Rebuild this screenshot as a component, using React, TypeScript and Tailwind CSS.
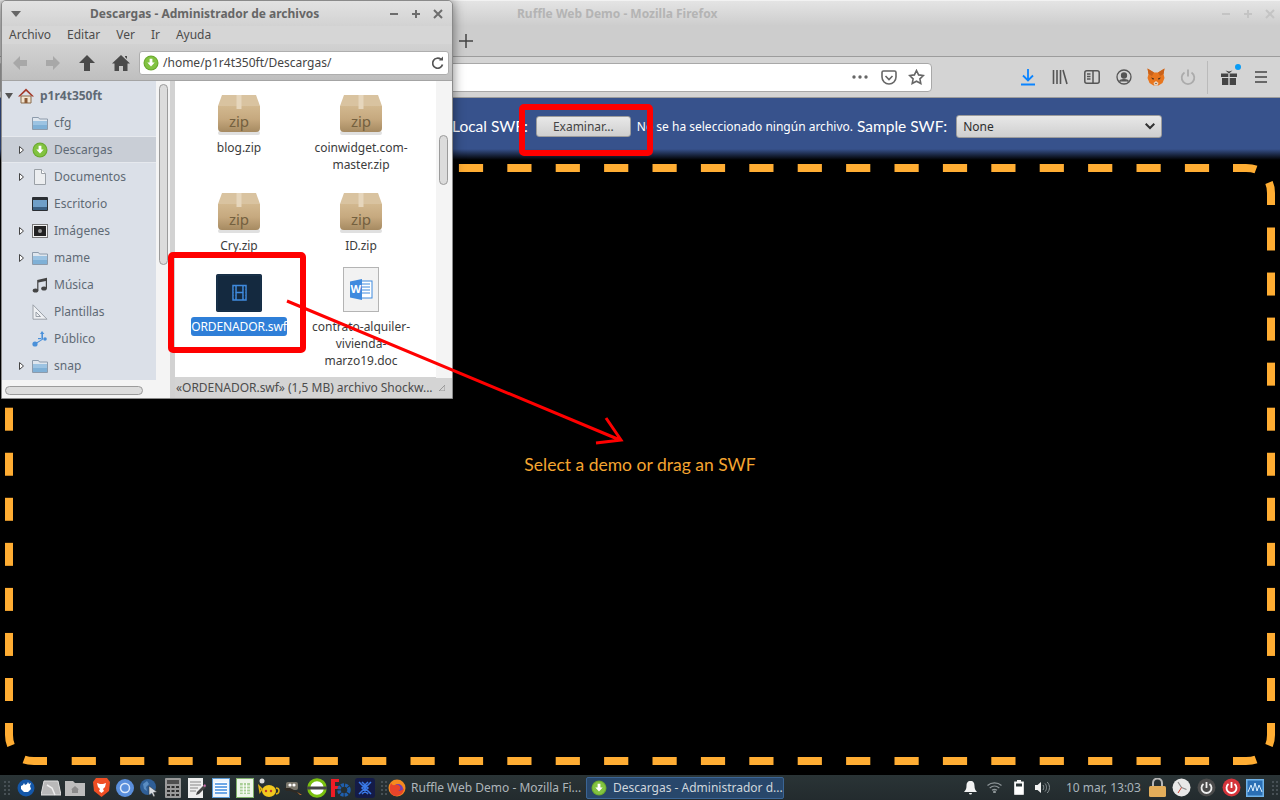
import type { ReactNode } from 'react';

const sidebarRows = [
	{ label: 'cfg', icon: 'folder', arrow: false },
	{ label: 'Descargas', icon: 'download', arrow: true, selected: true },
	{ label: 'Documentos', icon: 'doc', arrow: true },
	{ label: 'Escritorio', icon: 'desktop', arrow: false },
	{ label: 'Imágenes', icon: 'images', arrow: true },
	{ label: 'mame', icon: 'folder', arrow: true },
	{ label: 'Música', icon: 'music', arrow: false },
	{ label: 'Plantillas', icon: 'templates', arrow: false },
	{ label: 'Público', icon: 'share', arrow: false },
	{ label: 'snap', icon: 'folder', arrow: true },
];

const DownloadBadge = ({ size = 16 }: { size?: number }) => (
	<svg width={size} height={size} viewBox="0 0 16 16">
		<circle cx="8" cy="8" r="7.5" fill="#6aa82e" />
		<circle cx="8" cy="8" r="6.5" fill="#82c341" />
		<path d="M6.6 3.8h2.8v3.6h2.3L8 11.6 4.3 7.4h2.3z" fill="#fff" />
	</svg>
);

const FolderIcon = () => (
	<svg width="16" height="16" viewBox="0 0 16 16">
		<path d="M.5 2.5h6l1 1.5h8v10.5H.5z" fill="#dfe6ee" stroke="#8d9bab" />
		<rect x="1" y="6" width="14" height="8" fill="#9cc3e2" />
		<rect x="1" y="10" width="14" height="4" fill="#7fb0d6" />
	</svg>
);

const SideIcon = ({ name }: { name: string }) => {
	if (name === 'folder') return <FolderIcon />;
	if (name === 'download') return <DownloadBadge />;
	if (name === 'doc')
		return (
			<svg width="16" height="16" viewBox="0 0 16 16">
				<path d="M2.5.5h7l4 4v11h-11z" fill="#eceef0" stroke="#9aa0a6" />
				<path d="M9.5.5v4h4" fill="#fff" stroke="#9aa0a6" />
			</svg>
		);
	if (name === 'desktop')
		return (
			<svg width="16" height="16" viewBox="0 0 16 16">
				<rect y="1" width="16" height="14" rx="1" fill="#2a2e33" />
				<rect x="1" y="4" width="14" height="7" fill="#6f9fc8" />
				<rect x="1" y="11" width="14" height="3" fill="#3a5f82" />
			</svg>
		);
	if (name === 'images')
		return (
			<svg width="16" height="16" viewBox="0 0 16 16">
				<rect x=".5" y="1.5" width="15" height="13" fill="#f2f2f2" stroke="#777" />
				<rect x="2" y="3" width="12" height="10" fill="#222" />
				<circle cx="8" cy="8" r="2" fill="#999" />
			</svg>
		);
	if (name === 'music')
		return (
			<svg width="16" height="16" viewBox="0 0 16 16" fill="#444">
				<ellipse cx="3.5" cy="13.5" rx="2.8" ry="2" />
				<ellipse cx="12" cy="11.5" rx="2.8" ry="2" />
				<path d="M5.2 13.5V3L15 .8v10.6h-1.2V4L6.4 5.6v7.9z" />
			</svg>
		);
	if (name === 'templates')
		return (
			<svg width="16" height="16" viewBox="0 0 16 16" fill="none" stroke="#9aa0a8">
				<path d="M1 .8v14.4h14z" fill="#eef0f3" />
				<path d="M4 8v4.5h4.5z" />
			</svg>
		);
	return (
		<svg width="16" height="16" viewBox="0 0 16 16" fill="#4a90d9">
			<circle cx="3" cy="13" r="2.6" />
			<circle cx="13" cy="8" r="1.8" />
			<path d="M10 0l2.4 3H11v5.5L4 13l-.6-1 6-3.6V3H8z" />
			<path d="M6 7h3v1.2H6z" />
		</svg>
	);
};

const ZipIcon = () => (
	<svg width="44" height="42" viewBox="0 0 44 42">
		<defs>
			<linearGradient id="zipBody" x1="0" y1="0" x2="0" y2="1">
				<stop offset="0" stopColor="#d2b88f" />
				<stop offset="0.5" stopColor="#c6a97f" />
				<stop offset="1" stopColor="#a68a61" />
			</linearGradient>
		</defs>
		<rect x="1" y="37" width="42" height="4" rx="2" fill="#e0e0e0" />
		<path d="M5 1h34l4 11H1z" fill="#d9c3a0" />
		<path d="M1 12h42v22a4 4 0 0 1-4 4H5a4 4 0 0 1-4-4z" fill="url(#zipBody)" />
		<rect x="19.500" y="1" width="5" height="14" fill="#e6d6bc" />
		<text x="22" y="33" textAnchor="middle" fontSize="15" fontFamily="Noto Sans, sans-serif" fill="#74603f">
			zip
		</text>
	</svg>
);

const SwfIcon = () => (
	<svg width="46" height="38" viewBox="0 0 46 38">
		<rect width="46" height="38" rx="2" fill="#0f2238" />
		<rect x="1" y="1" width="44" height="36" rx="1" fill="#14293f" stroke="#1f3a55" />
		<g fill="none" stroke="#3f8ade" strokeWidth="1.500">
			<rect x="17" y="11.500" width="13" height="14.500" />
			<path d="M20 11.500v14.500M27 11.500v14.500M20 18.500h7" />
			<path d="M17.700 14h1.500M17.700 17h1.500M17.700 20h1.500M17.700 23h1.500M27.800 14h1.500M27.800 17h1.500M27.800 20h1.500M27.800 23h1.500" strokeWidth="1" stroke="#14293f" />
		</g>
	</svg>
);

const WordIcon = () => (
	<svg width="36" height="45" viewBox="0 0 36 45">
		<rect x=".5" y=".5" width="35" height="44" fill="#f2f2f2" stroke="#b4b4b4" />
		<rect x="16" y="14" width="13" height="17" fill="#fff" stroke="#3f8ade" />
		<path d="M18 17h9M18 20h9M18 23h9M18 26h9" stroke="#3f8ade" />
		<path d="M7 14.500l12-2.500v21l-12-2.500z" fill="#3f8ade" />
		<text x="12.800" y="26" textAnchor="middle" fontSize="11" fontWeight="700" fontFamily="Noto Sans, sans-serif" fill="#fff">
			W
		</text>
	</svg>
);

const FileCell = ({ icon, children, className = '' }: { icon: ReactNode; children: ReactNode; className?: string }) => (
	<div className="flex flex-col items-center">
		<div className="flex h-[48px] items-end pb-[3px]">{icon}</div>
		<div className={`text-center leading-[17px] text-[#3c3c3c] ${className}`}>{children}</div>
	</div>
);

const ThunarWindow = () => (
	<div className="absolute left-[1px] top-0 flex h-[399px] w-[452px] flex-col overflow-hidden rounded-t-[5px] border border-[#8a8a8a] bg-[#d4d4d4] text-[12px] shadow-[0_0_12px_rgba(0,0,0,0.5)]">
		{/* title */}
		<div className="flex h-[25px] shrink-0 items-center bg-[linear-gradient(#e2e2e2,#d2d2d2)] font-bold text-[#666]">
			<svg width="10" height="6" viewBox="0 0 10 6" className="ml-[9px]">
				<path d="M0 0h10L5 6z" fill="#666" />
			</svg>
			<span className="ml-[69px]">Descargas - Administrador de archivos</span>
			<div className="ml-auto mr-[9px] flex items-center gap-[12px] text-[#6d6d6d]">
				<svg width="10" height="10" viewBox="0 0 10 10"><path d="M1 5h8" stroke="currentColor" strokeWidth="2" /></svg>
				<svg width="10" height="10" viewBox="0 0 10 10"><path d="M1 5h8M5 1v8" stroke="currentColor" strokeWidth="2" /></svg>
				<svg width="10" height="10" viewBox="0 0 10 10"><path d="M1 1l8 8M9 1l-8 8" stroke="currentColor" strokeWidth="2" /></svg>
			</div>
		</div>
		{/* menu */}
		<div className="flex h-[18px] shrink-0 items-center gap-[16px] bg-[#d6d6d6] pl-[7px] text-[#4c4c4c]">
			<span>Archivo</span>
			<span>Editar</span>
			<span>Ver</span>
			<span>Ir</span>
			<span>Ayuda</span>
		</div>
		{/* toolbar */}
		<div className="flex h-[37px] shrink-0 items-center border-b border-[#a4a4a4] bg-[linear-gradient(#d2d2d2,#bfbfbf)] pl-[9px] pt-[2px]">
			<div className="flex items-center gap-[14px]">
				<svg width="18" height="18" viewBox="0 0 18 18"><path d="M9 2L2 9l7 7v-4h7V6H9z" fill="#a8a8a8" /></svg>
				<svg width="18" height="18" viewBox="0 0 18 18" className="ml-[1px]"><path d="M9 2l7 7-7 7v-4H2V6h7z" fill="#a8a8a8" /></svg>
				<svg width="18" height="18" viewBox="0 0 18 18" className="ml-[2px]"><path d="M9 1l8 8h-5v8H6V9H1z" fill="#4a4a4a" /></svg>
				<svg width="18" height="18" viewBox="0 0 18 18" className="ml-[2px]"><path d="M9 1L0 9.500h2.500V17h4.500v-5h4v5h4.500V9.500H18zM13 2h2v3l-2-2z" fill="#4a4a4a" /></svg>
			</div>
			<div className="ml-[9px] flex h-[24px] w-[310px] items-center rounded-[3px] border border-[#aeaeae] bg-white pl-[3px] pr-[3px] text-[#444]">
				<DownloadBadge />
				<span className="ml-[4px]">/home/p1r4t350ft/Descargas/</span>
				<svg width="14" height="14" viewBox="0 0 14 14" className="ml-auto" fill="none" stroke="#555" strokeWidth="1.700">
					<path d="M11.500 8.500a5 5 0 1 1-1.500-5" />
					<path d="M8 4.500h4V.5z" fill="#555" stroke="none" />
				</svg>
			</div>
		</div>
		{/* panes */}
		<div className="flex min-h-0 flex-1">
			<div className="relative flex w-[173px] shrink-0 bg-[#d2d2d2]">
				<div className="relative w-[168px] overflow-hidden bg-[#f4f4f4]">
					<div className="flex h-[299px] w-[154px] flex-col bg-[#dbe0e8] pt-[1px] text-[#5f6a75]">
						<div className="flex h-[27px] items-center font-bold">
							<svg width="8" height="6" viewBox="0 0 8 6" className="ml-[3px]"><path d="M0 0h8L4 6z" fill="#555" /></svg>
							<svg width="16" height="16" viewBox="0 0 16 16" className="ml-[5px]">
								<path d="M3 8v7h10V8z" fill="#f2e4d0" stroke="#8a6a4a" />
								<path d="M8 .5L0 8.500h2L8 3l6 5.500h2z" fill="#a33a2a" />
								<rect x="6.500" y="10" width="3" height="5" fill="#8a5a36" />
							</svg>
							<span className="ml-[6px]">p1r4t350ft</span>
						</div>
						{sidebarRows.map((row) => (
							<div
								key={row.label}
								className={`flex h-[27px] items-center ${row.selected ? 'border-y border-[#e6e9ee] bg-[#c9ced6]' : ''}`}
							>
								<div className="flex w-[30px] shrink-0 justify-end pr-[8px]">
									{row.arrow && (
										<svg width="5" height="8" viewBox="0 0 5 8"><path d="M.5.5l4 3.500-4 3.500z" fill="#fff" stroke="#444" /></svg>
									)}
								</div>
								<SideIcon name={row.icon} />
								<span className="ml-[6px]">{row.label}</span>
							</div>
						))}
					</div>
					<div className="absolute right-[2px] top-[3px] h-[181px] w-[9px] rounded-full border border-[#9b9b9b] bg-[#dcdcdc]" />
					<div className="absolute bottom-[3px] left-[3px] h-[9px] w-[138px] rounded-full border border-[#9b9b9b] bg-[#dcdcdc]" />
				</div>
			</div>
			<div className="flex min-w-0 flex-1 flex-col">
				<div className="flex min-h-0 flex-1">
					<div className="grid h-[296px] w-[261px] shrink-0 grid-cols-[122px_122px] grid-rows-[98px_78px_110px] overflow-hidden bg-white pl-[3px] pt-[10px]">
						<FileCell icon={<ZipIcon />}>blog.zip</FileCell>
						<FileCell icon={<ZipIcon />}>
							coinwidget.com-
							<br />
							master.zip
						</FileCell>
						<FileCell icon={<ZipIcon />}>Cry.zip</FileCell>
						<FileCell icon={<ZipIcon />}>ID.zip</FileCell>
						<FileCell icon={<SwfIcon />} className="mt-[2px] rounded-[3px] bg-[#2f7fd8] !leading-[19px] tracking-[-0.12px] !text-white">
							ORDENADOR.swf
						</FileCell>
						<FileCell icon={<WordIcon />} className="mt-[3px]">
							contrato-alquiler-
							<br />
							vivienda-
							<br />
							marzo19.doc
						</FileCell>
					</div>
					<div className="relative flex-1 bg-[#f4f4f4]">
						<div className="absolute left-[3px] top-[54px] h-[50px] w-[9px] rounded-full border border-[#9b9b9b] bg-[#dcdcdc]" />
					</div>
				</div>
				<div className="flex h-[20px] shrink-0 items-center bg-[#d4d4d4] pl-[1px] text-[#4c4c4c]">
					<span className="tracking-[-0.03px]">«ORDENADOR.swf» (1,5 MB) archivo Shockw...</span>
					<svg width="6" height="6" viewBox="0 0 6 6" className="ml-auto mr-[7px]"><path d="M6 0v6H0z" fill="none" stroke="#999" /></svg>
				</div>
			</div>
		</div>
	</div>
);

const FoxIcon = () => (
	<svg width="18" height="18" viewBox="0 0 18 18">
		<path d="M.5.5l6.500 4h4L17.500.5 16.500 6l1 4-2 5-4 2.500h-5L2.500 15l-2-5 1-4z" fill="#e8761e" />
		<path d="M.5.5L7 4.500 5 8 1.500 6zM17.500.5L11 4.500 13 8l3.500-2z" fill="#c9621a" />
		<path d="M4 9.500l3 .8-.8 1.800zM14 9.500l-3 .8.8 1.800z" fill="#4a2f1a" />
		<path d="M6.500 15l1 2.500h3l1-2.500-2.500-2z" fill="#e8d3c0" />
		<path d="M8 15h2l-1 1z" fill="#222" />
	</svg>
);

const FirefoxToolbarIcons = () => (
	<div className="ml-auto flex items-center">
		<div className="flex w-[32px] justify-center">
			<svg width="16" height="18" viewBox="0 0 16 18" fill="none" stroke="#0a84ff" strokeWidth="1.800">
				<path d="M8 1v11M3 7.500l5 5 5-5M1 16.500h14" />
			</svg>
		</div>
		<div className="flex w-[32px] justify-center">
			<svg width="16" height="16" viewBox="0 0 16 16" fill="none" stroke="#555" strokeWidth="1.600">
				<path d="M1.500 1v14M5 1v14M8.500 1v14M11 1l4 14" />
			</svg>
		</div>
		<div className="flex w-[32px] justify-center">
			<svg width="16" height="14" viewBox="0 0 16 14" fill="none" stroke="#555" strokeWidth="1.500">
				<rect x=".8" y=".8" width="14.400" height="12.400" rx="2" />
				<path d="M9 1v12M3 4h3.500M3 6.500h3.500M3 9h3.500" />
			</svg>
		</div>
		<div className="flex w-[32px] justify-center">
			<svg width="16" height="16" viewBox="0 0 16 16" fill="none" stroke="#555" strokeWidth="1.300">
				<circle cx="8" cy="8" r="7" />
				<circle cx="8" cy="6.500" r="2.500" fill="#555" />
				<path d="M3.500 12.500c1-2.500 8-2.500 9 0" fill="#555" />
			</svg>
		</div>
		<div className="flex w-[32px] justify-center">
			<FoxIcon />
		</div>
		<div className="flex w-[32px] justify-center">
			<svg width="16" height="16" viewBox="0 0 16 16" fill="none" stroke="#ababab" strokeWidth="1.800">
				<path d="M4.500 3.500a6.300 6.300 0 1 0 7 0M8 .5v7" />
			</svg>
		</div>
		<div className="ml-[3px] mr-[5px] h-[33px] w-px bg-[#bababa]" />
		<div className="relative flex w-[32px] justify-center">
			<svg width="16" height="16" viewBox="0 0 16 16" fill="#444">
				<path d="M0 4.500h7.300v3.500H0zM8.700 4.500H16v3.500H8.700zM1 9h6.300v7H1zM8.700 9H15v7H8.700z" />
				<path d="M8 4.500L4.500 1.500 8 2.500l3.500-1z" />
			</svg>
			<span className="absolute right-[4px] top-[-5px] h-[6px] w-[6px] rounded-full bg-[#0a9cf5]" />
		</div>
		<div className="flex w-[32px] justify-center">
			<svg width="14" height="12" viewBox="0 0 14 12" stroke="#444" strokeWidth="1.600">
				<path d="M1 1h12M1 6h12M1 11h12" />
			</svg>
		</div>
		<div className="w-[3px]" />
	</div>
);

const Firefox = () => (
	<div className="flex min-h-0 flex-1 flex-col">
		<div className="h-[57px] shrink-0 border-b border-[#9c9c9c] border-t border-t-[#f2f2f2] bg-[linear-gradient(#e4e4e4,#cdcdcd_45%,#cdcdcd)]">
			<div className="flex h-[26px] items-center pl-[517px] pr-[5px] text-[12px] font-bold text-[#b4b4b4]">
				Ruffle Web Demo - Mozilla Firefox
				<div className="ml-auto flex items-center gap-[12px] text-[#c4c4c4]">
					<svg width="10" height="10" viewBox="0 0 10 10"><path d="M1 5h8" stroke="currentColor" strokeWidth="2" /></svg>
					<svg width="10" height="10" viewBox="0 0 10 10"><path d="M1 5h8M5 1v8" stroke="currentColor" strokeWidth="2" /></svg>
					<svg width="10" height="10" viewBox="0 0 10 10"><path d="M1 1l8 8M9 1l-8 8" stroke="currentColor" strokeWidth="2" /></svg>
				</div>
			</div>
			<div className="flex h-[27px] items-center pl-[459px]">
				<svg width="14" height="14" viewBox="0 0 14 14" stroke="#444" strokeWidth="1.500"><path d="M7 0v14M0 7h14" /></svg>
			</div>
		</div>
		<div className="flex h-[41px] shrink-0 items-center border-b border-[#9c9c9c] bg-[#d4d4d4]">
			<div className="flex h-[29px] w-[932px] shrink-0 items-center justify-end rounded-r-[4px] border border-[#a8a8a8] bg-white pr-[6px]">
				<div className="flex items-center gap-[13px]">
					<svg width="16" height="4" viewBox="0 0 16 4" fill="#666">
						<circle cx="2" cy="2" r="1.700" />
						<circle cx="8" cy="2" r="1.700" />
						<circle cx="14" cy="2" r="1.700" />
					</svg>
					<svg width="16" height="15" viewBox="0 0 16 15" fill="none" stroke="#666" strokeWidth="1.600">
						<path d="M1 2.500a1.500 1.500 0 0 1 1.500-1.500h11a1.500 1.500 0 0 1 1.500 1.500V7a7 7 0 0 1-14 0z" />
						<path d="M4.500 6l3.500 3.500L11.500 6" />
					</svg>
					<svg width="17" height="16" viewBox="0 0 17 16" fill="none" stroke="#666" strokeWidth="1.600" className="-ml-[2px]">
						<path d="M8.500 1.500l2.100 4.400 4.800.6-3.500 3.300.9 4.700-4.300-2.300-4.300 2.300.9-4.700-3.500-3.300 4.800-.6z" />
					</svg>
				</div>
			</div>
			<FirefoxToolbarIcons />
		</div>
		<div className="flex h-[64px] shrink-0 items-start bg-[linear-gradient(#37528c,#37528c_51px,#000_62px)] pl-[452px] pt-[16px] text-white">
			<div className="flex h-[25px] items-center">
				<span className="font-['Lato',sans-serif] text-[15.5px]">Local SWF:</span>
				<div className="ml-[8px] flex h-[21px] w-[95px] items-center justify-center rounded-[3px] border border-[#9c9c9c] bg-[linear-gradient(#e8e8e8,#cfcfcf)] text-[12px] text-[#444]">
					Examinar...
				</div>
				<span className="ml-[6px] text-[12px]">No se ha seleccionado ningún archivo.</span>
				<span className="ml-[4px] font-['Lato',sans-serif] text-[15.5px]">Sample SWF:</span>
				<div className="ml-[9px] flex h-[23px] w-[206px] items-center justify-between rounded-[3px] border border-[#9c9c9c] bg-[linear-gradient(#e8e8e8,#cfcfcf)] pl-[6px] pr-[6px] text-[12px] text-[#2e2e2e]">
					None
					<svg width="10" height="7" viewBox="0 0 10 7" fill="none" stroke="#333" strokeWidth="2"><path d="M.7.7L5 5l4.300-4.300" /></svg>
				</div>
			</div>
		</div>
		<div className="flex min-h-0 flex-1 items-center justify-center bg-black pb-[6px] font-['Lato',sans-serif] text-[17.5px] text-[#f5a530]">
			Select a demo or drag an SWF
		</div>
	</div>
);

const topDashes = Array.from({ length: 24 }, (_, i) => 71.7 + 48.4 * i);
const sideDashes = Array.from({ length: 11 }, (_, i) => 227.5 + 45.05 * i);

const DashedFrame = () => (
	<svg className="pointer-events-none absolute left-0 top-0" width="1280" height="800" fill="none" stroke="#ffad33" strokeWidth="8">
		{topDashes.map((x) => (
			<g key={x}>
				<path d={`M${x} 168h24.2`} />
				<path d={`M${x} 761h24.2`} />
			</g>
		))}
		{sideDashes.map((y) => (
			<g key={y}>
				<path d={`M9 ${y}v23`} />
				<path d={`M1271 ${y}v23`} />
			</g>
		))}
		<path d="M1233 168h13q6 0 10 1.500" />
		<path d="M1271 205v-12q0-6-2-10.500" />
		<path d="M1233 761h13q6 0 10-1.500" />
		<path d="M1271 723v12q0 6-2 10.500" />
		<path d="M47 761H34q-6 0-10-1.500" />
		<path d="M9 723v12q0 6 2 10.500" />
	</svg>
);

const Annotations = () => (
	<>
		<div className="absolute left-[168px] top-[252px] h-[101px] w-[138px] rounded-[5px] border-[6px] border-[#ff0000]" />
		<div className="absolute left-[519px] top-[104px] h-[52px] w-[134px] rounded-[5px] border-[6px] border-[#ff0000]" />
		<svg className="pointer-events-none absolute left-0 top-0" width="1280" height="800" fill="none" stroke="#ff0000" strokeWidth="3">
			<path d="M287 301L620 440M606 418l15 22-25 3" />
		</svg>
	</>
);

const slots: ReactNode[] = [
	<svg key="dock" width="18" height="18" viewBox="0 0 18 18"><circle cx="9" cy="9" r="8.500" fill="#1457a8" /><path d="M4 7l2-1 1-2 1 2 2-1 1-2 1 2 2-1-1 3 1 3-3 3H7L4 10z" fill="#fff" /></svg>,
	<svg key="map" width="20" height="16" viewBox="0 0 20 16"><path d="M3 1h14l3 14H0z" fill="#b9b9b9" stroke="#e0e0e0" /><path d="M6 5l5 3 3 7" stroke="#eee" strokeWidth="1.500" fill="none" /></svg>,
	<svg key="folder" width="20" height="16" viewBox="0 0 20 16"><path d="M0 1h8l2 2h10v13H0z" fill="#bdbdbd" /><path d="M10 6l4 3.500h-1V13H7V9.500H6z" fill="#8c8c8c" /></svg>,
	<svg key="brave" width="17" height="19" viewBox="0 0 17 19"><path d="M3 0h11l3 4-1 9-7.500 6L1 13 0 4z" fill="#f04e23" /><path d="M4 5l3 1h3l3-1-1 4-2 2 1 2-2.500 2L6 13l1-2-2-2z" fill="#fff" /></svg>,
	<svg key="chromium" width="18" height="18" viewBox="0 0 18 18"><circle cx="9" cy="9" r="9" fill="#5a8fdc" /><circle cx="9" cy="9" r="4.500" fill="#5a8fdc" stroke="#dbe8fa" strokeWidth="1.500" /></svg>,
	<svg key="globe" width="18" height="18" viewBox="0 0 18 18"><circle cx="8" cy="8" r="8" fill="#2f5f97" /><path d="M3 5l4-3 2 3-3 3 1 4-3-2z" fill="#5b8dc2" /><path d="M9 7l8 6-3.500.5 1.500 3.500-1.500.8-1.700-3.600L9 16z" fill="#d8dde2" stroke="#333" strokeWidth=".5" /></svg>,
	<svg key="calc" width="16" height="20" viewBox="0 0 16 20"><rect width="16" height="20" rx="1" fill="#9a9a9a" /><rect x="2" y="2" width="12" height="4" fill="#4e4e4e" /><path d="M2 8h3v2H2zM6.500 8h3v2h-3zM11 8h3v2h-3zM2 12h3v2H2zM6.500 12h3v2h-3zM11 12h3v2h-3zM2 16h3v2H2zM6.500 16h3v2h-3zM11 16h3v2h-3z" fill="#2e2e2e" /></svg>,
	<svg key="note" width="18" height="20" viewBox="0 0 18 20"><rect width="15" height="20" fill="#eeeeee" /><path d="M2 4h11M2 7h11M2 10h8M2 13h6" stroke="#888" /><path d="M8 17l1-3 7-7 2 2-7 7z" fill="#444" /><path d="M15 8l2-2 1 2-1 1z" fill="#d070b0" /></svg>,
	<svg key="writer" width="18" height="20" viewBox="0 0 18 20"><rect x=".5" y=".5" width="17" height="19" fill="#eef4fb" stroke="#5a9ad6" /><rect x="3" y="4" width="12" height="12" fill="#fff" /><path d="M3 6h12M3 9h12M3 12h12M3 15h12" stroke="#3f8ade" strokeWidth="1.500" /></svg>,
	<svg key="calcdoc" width="18" height="20" viewBox="0 0 18 20"><rect x=".5" y=".5" width="17" height="19" fill="#eef5ea" stroke="#7fb069" /><path d="M4 5h10v11H4z" fill="#a9cf97" /><path d="M7.300 5v11M10.600 5v11M4 8h10M4 11h10M4 14h10" stroke="#fff" /></svg>,
	<svg key="teapot" width="22" height="22" viewBox="0 0 22 22"><ellipse cx="11" cy="14" rx="7" ry="6" fill="#f2c81e" /><path d="M4 12l-3-3 1 6zM18 11c4 0 4 5 0 6" fill="none" stroke="#e2b410" strokeWidth="1.500" /><circle cx="8" cy="14" r="1.200" fill="#c0392b" /><circle cx="13" cy="14" r="1.200" fill="#c0392b" /><circle cx="4" cy="4" r="2.500" fill="#ddd" /></svg>,
	<svg key="gimp" width="18" height="14" viewBox="0 0 18 14"><rect x="2" y="1" width="12" height="8" rx="2" fill="#7a776c" /><circle cx="6" cy="4" r="1.600" fill="#fff" /><circle cx="10" cy="4" r="1.600" fill="#fff" /><path d="M0 7h6l10 5-1 1-9-3H2z" fill="#2e2a24" /><path d="M13 11l5 3-2 0z" fill="#c9742a" /></svg>,
	<svg key="ring" width="20" height="20" viewBox="0 0 20 20"><circle cx="10" cy="10" r="8.300" fill="#fff" stroke="#7ac00f" strokeWidth="3" /><rect y="8.500" width="20" height="3" fill="#444" /></svg>,
	<svg key="fgear" width="20" height="18" viewBox="0 0 20 18"><path d="M0 0h8v3H4v4h4v3H4v8H0z" fill="#ee1c25" /><circle cx="13" cy="11" r="5" fill="none" stroke="#1f5fae" strokeWidth="3.500" strokeDasharray="3 1" /></svg>,
	<svg key="xapp" width="20" height="20" viewBox="0 0 20 20"><rect width="20" height="20" rx="3" fill="#141b48" /><path d="M4 4l6 6-6 6M16 4l-6 6 6 6M7 4l6 6-6 6M13 4L7 10l6 6" fill="none" stroke="#3a79e8" strokeWidth="1.500" /></svg>,
];

const Grip = () => (
	<div className="grid w-[6px] grid-cols-2 gap-[2px]">
		{[0, 1, 2, 3, 4, 5, 6, 7].map((dot) => (
			<span key={dot} className="h-[2px] w-[2px] bg-[#475055]" />
		))}
	</div>
);

const Taskbar = () => (
	<div className="flex h-[25px] shrink-0 items-center bg-[linear-gradient(#2a3436,#232b2e)] text-[12px]">
		<div className="ml-[4px] flex items-center">
			<Grip />
		</div>
		<div className="ml-[4px] flex items-center">
			{slots.map((icon, i) => (
				<div key={i} className={`flex w-[24px] justify-center ${i === 1 ? 'ml-[1px]' : ''} ${i === 3 ? 'ml-[2px]' : ''}`}>
					{icon}
				</div>
			))}
		</div>
		<div className="ml-[4px] flex w-[6px] justify-center">
			<Grip />
		</div>
		<div className="ml-[1px] flex h-[23px] w-[198px] items-center text-[#aeb6ba]">
			<svg width="18" height="18" viewBox="0 0 18 18">
				<circle cx="9" cy="9" r="8.500" fill="#f58a1f" />
				<circle cx="10" cy="10" r="5" fill="#6f3fb5" />
				<path d="M3 4c2 4 5 1 7 2 3 1 3 5 0 6 3 0 5-1 6-3 0 5-4 8-8 8-5 0-8-6-5-13z" fill="#e8442a" />
			</svg>
			<span className="ml-[5px] whitespace-nowrap">Ruffle Web Demo - Mozilla Fi...</span>
		</div>
		<div className="flex h-[22px] w-[198px] items-center rounded-[2px] border border-[#3b6595] bg-[#28476b] pl-[4px] text-[#cfd6dc]">
			<DownloadBadge />
			<span className="ml-[6px] whitespace-nowrap">Descargas - Administrador d...</span>
		</div>
		<div className="ml-auto flex items-center">
			<div className="flex w-[24px] justify-center">
				<svg width="13" height="14" viewBox="0 0 13 14" fill="#f2f2f2"><path d="M6.500 0c3 0 4 2 4 5 0 3 1 4 2.500 6H0c1.500-2 2.500-3 2.500-6 0-3 1-5 4-5zM5 12h3a1.500 1.500 0 0 1-3 0z" /></svg>
			</div>
			<div className="flex w-[25px] justify-center">
				<svg width="15" height="11" viewBox="0 0 15 11" fill="none" stroke="#8e9699" strokeWidth="1.200"><path d="M.5 3.500c4-3.500 10-3.500 14 0M2.700 6c3-2.500 6.600-2.500 9.600 0M5 8.300c1.500-1.200 3.500-1.200 5 0" /><circle cx="7.500" cy="10" r=".8" fill="#c8cccd" /></svg>
			</div>
			<div className="flex w-[24px] justify-center">
				<svg width="10" height="15" viewBox="0 0 10 15"><path d="M3 0h4v2H3z" fill="#f2f2f2" /><rect x=".7" y="2" width="8.600" height="12.300" fill="#fff" stroke="#f2f2f2" /><rect x="2" y="3.500" width="6" height="3" fill="#2a3436" /></svg>
			</div>
			<div className="flex w-[23px] justify-center">
				<svg width="15" height="13" viewBox="0 0 15 13" fill="none"><path d="M0 4h2.500L6 1v11L2.500 9H0z" fill="#f2f2f2" /><path d="M8 4c1 1.500 1 3.500 0 5M10 2.500c2 2 2 6 0 8M12.200 1c3 3 3 8 0 11" stroke="#8e9699" /></svg>
			</div>
			<span className="ml-[12px] w-[76px] whitespace-nowrap text-[#a9b4bb]">10 mar, 13:03</span>
			<div className="ml-[3px] flex w-[24px] justify-center">
				<svg width="17" height="19" viewBox="0 0 17 19"><path d="M4 9V5a4.500 4.500 0 0 1 9 0v4" fill="none" stroke="#b7b7b7" strokeWidth="2" /><rect y="8" width="17" height="11" rx="1.500" fill="#e3ad5a" /></svg>
			</div>
			<div className="flex w-[24px] justify-center">
				<svg width="19" height="19" viewBox="0 0 19 19"><circle cx="9.500" cy="9.500" r="9" fill="#e8e8e8" /><path d="M9.500 9.500L6 4M9.500 9.500l5 2" stroke="#888" strokeWidth="1.200" /><path d="M9.500 9.500L6 15" stroke="#d04030" /></svg>
			</div>
			<div className="flex w-[26px] justify-center">
				<svg width="19" height="19" viewBox="0 0 19 19" fill="none"><circle cx="9.500" cy="9.500" r="9" fill="#4b4b4b" /><path d="M6.500 6a5 5 0 1 0 6 0M9.500 4v6" stroke="#eee" strokeWidth="1.800" /></svg>
			</div>
			<div className="flex w-[24px] justify-center">
				<svg width="19" height="19" viewBox="0 0 19 19" fill="none"><circle cx="9.500" cy="9.500" r="9" fill="#d5343b" /><path d="M6.500 6a5 5 0 1 0 6 0M9.500 4v6" stroke="#fff" strokeWidth="1.800" /></svg>
			</div>
			<div className="flex w-[24px] justify-center">
				<svg width="18" height="18" viewBox="0 0 18 18"><rect width="18" height="18" fill="#6fb2e8" /><rect x="1.500" y="1.500" width="15" height="15" fill="#2b6fb4" /><path d="M2 13l3-7 2 6 2-8 2 8 2-6 3 7" fill="none" stroke="#d8eeff" /></svg>
			</div>
			<div className="ml-[5px] mr-[2px]">
				<Grip />
			</div>
		</div>
	</div>
);

export default function App() {
	return (
		<div className="relative flex h-[800px] w-[1280px] flex-col overflow-hidden bg-black font-['Noto_Sans',sans-serif]">
			<Firefox />
			<Taskbar />
			<DashedFrame />
			<ThunarWindow />
			<Annotations />
		</div>
	);
}
